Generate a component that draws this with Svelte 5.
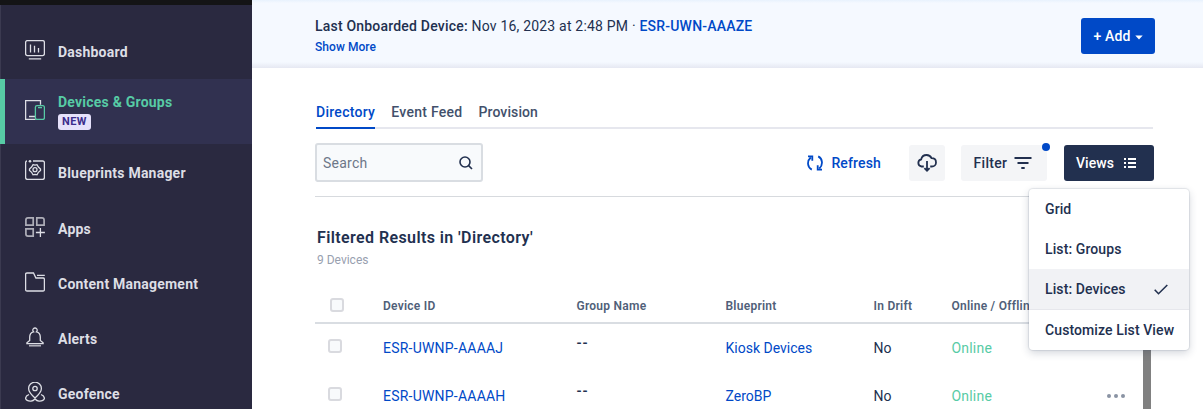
<script lang="ts">
    let activeTab = "Directory";
    let activeView = "List: Devices";
    let search = "";

    const navItems = [
        { icon: "dashboard", text: "Dashboard" },
        { icon: "devices", text: "Devices & Groups", active: true },
        { icon: "blueprints", text: "Blueprints Manager" },
        { icon: "apps", text: "Apps" },
        { icon: "folder", text: "Content Management" },
        { icon: "alerts", text: "Alerts" },
        { icon: "geofence", text: "Geofence" },
    ];
    const tabs = ["Directory", "Event Feed", "Provision"];
    const views = ["Grid", "List: Groups", "List: Devices"];
    const devices = [
        { id: "ESR-UWNP-AAAAJ", group: "--", blueprint: "Kiosk Devices", drift: "No", status: "Online" },
        { id: "ESR-UWNP-AAAAH", group: "--", blueprint: "ZeroBP", drift: "No", status: "Online" },
    ];
</script>

<div class="page">
    <nav class="sidebar">
        {#each navItems as item}
            <a href="#{item.icon}" class="nav-item {item.icon}" class:active={item.active}>
                <svg class="nav-icon" width="20" height="20" viewBox="0 0 20 20">
                    {#if item.icon === "dashboard"}
                        <rect x=".6" y=".6" width="18.8" height="15" rx="1.8" />
                        <path d="M5.5 4.5v8M9.5 5.8v6.7M13.5 8v4.5M3.8 18.8h12.4" />
                    {:else if item.icon === "devices"}
                        <path d="M15.5 4.7V.6H.6v18.8h10M4 16.5h7" />
                        <path class="green" d="M12 5.7h5.8q1.6 0 1.6 1.6v10.5q0 1.6-1.6 1.6H12q-1.6 0-1.6-1.6V7.3q0-1.6 1.6-1.6ZM13 7.6h4" />
                    {:else if item.icon === "blueprints"}
                        <path d="M2 1Q.6 1 .6 2.6v15q0 1.8 1.8 1.8h15.2q1.8 0 1.8-1.8V2.8q0-1.8-1.8-1.8H8" />
                        <circle class="dot" cx="5" cy="1.3" r="1.3" />
                        <path d="m8 4.7 2 .5 2-.5 1.4 2.4L15.5 9v1.5l-2.1 1.8L12 14.8l-2-.5-2 .5-1.4-2.5-2.1-1.8V9l2.1-1.9Z" />
                        <circle cx="10" cy="9.7" r="2" />
                    {:else if item.icon === "apps"}
                        <path class="dim" d="M8.2.9H3Q.9.9.9 3v5.2h7.3ZM11.8.9H17q2.1 0 2.1 2.1v5.2h-7.3ZM.9 11.8h7.3v7.3H3q-2.1 0-2.1-2.1Z" />
                        <path d="M15.4 11v9M10.9 15.5h9" />
                    {:else if item.icon === "folder"}
                        <path d="M2 1h6.5l2.4 5h7.2q1.3 0 1.3 1.3v10.4q0 1.3-1.3 1.3H2Q.6 19 .6 17.7V2.3Q.6 1 2 1ZM12 3.4h7.8" />
                    {:else if item.icon === "alerts"}
                        <path d="M8.5 4.8a2.2 2.2 0 1 1 3 0q3.8 1 3.8 5.2v3.5l2.8 2.3v.8H1.9v-.8l2.8-2.3V10q0-4.2 3.8-5.2Z" />
                        <path class="dim" d="M4 18.7h12" />
                    {:else}
                        <path d="M10 16S3.6 10.5 3.6 6.6a6.4 6.4 0 0 1 12.8 0C16.4 10.5 10 16 10 16Z" />
                        <circle cx="10" cy="6.5" r="2.2" />
                        <path d="M4 12.500C1.500 13.500.6 15 .6 16.300c0 1.800 2.400 3 5.400 2.800 1.800-.1 2.800-.8 4-2.100 1.200 1.300 2.200 2 4 2.100 3 .2 5.400-1 5.400-2.800 0-1.300-.9-2.800-3.400-3.800" />
                    {/if}
                </svg>
                <span class="nav-label">
                    <span class="nav-text">{item.text}</span>
                    {#if item.active}<span class="badge">NEW</span>{/if}
                </span>
            </a>
        {/each}
    </nav>

    <main>
        <header>
            <div class="onboarded">
                <p><b>Last Onboarded Device:</b> Nov 16, 2023 at 2:48 PM · <a href="#device">ESR-UWN-AAAZE</a></p>
                <a class="show-more" href="#more">Show More</a>
            </div>
            <button class="add">
                + Add
                <svg width="8" height="5" viewBox="0 0 8 5"><path d="M.3.4h7.4L4 4.4Z" fill="currentColor" /></svg>
            </button>
        </header>

        <section class="content">
            <div class="tabs">
                {#each tabs as tab}
                    <button class="tab" class:selected={activeTab === tab} on:click={() => (activeTab = tab)}>{tab}</button>
                {/each}
            </div>

            <div class="toolbar">
                <label class="search">
                    <input bind:value={search} placeholder="Search" />
                    <svg width="14" height="14" viewBox="0 0 14 14"><circle cx="6" cy="6" r="5" /><path d="m9.6 9.6 3.4 3.4" /></svg>
                </label>
                <button class="refresh">
                    <svg width="16" height="16" viewBox="0 0 16 16">
                        <path d="M4.8 14.6C.2 12.4-.2 6 3.7 2.5M1 1.300h4.300v4.500M11.200 1.400c4.600 2.200 5 8.600 1.100 12.100M15 14.700h-4.300v-4.500" />
                    </svg>
                    Refresh
                </button>
                <button class="download" aria-label="Download">
                    <svg width="20" height="18" viewBox="0 0 20 18">
                        <path d="M6.800 12.500H4.500a3.600 3.600 0 0 1-.3-7.100C4.700 2.700 7 1 9.600 1c2.400 0 4 1.200 4.900 3.200 2.700 0 4.500 1.800 4.500 4.200s-1.800 4.100-4.200 4.100h-1.600M10 7v9M7.400 14.100l2.600 2.600 2.600-2.600" />
                    </svg>
                </button>
                <button class="filter">
                    Filter
                    <svg width="18" height="12" viewBox="0 0 18 12"><path d="M.5 1h17M3.500 6h11M7.300 11h3.400" /></svg>
                    <span class="notice"></span>
                </button>
                <div class="views">
                    <button class="views-button">
                        Views
                        <svg width="12" height="10" viewBox="0 0 12 10"><path d="M0 1h2M0 5h2M0 9h2M4 1h8M4 5h8M4 9h8" /></svg>
                    </button>
                    <div class="menu">
                        {#each views as view}
                            <button class="option" class:chosen={activeView === view} on:click={() => (activeView = view)}>
                                {view}
                                {#if activeView === view}
                                    <svg width="14" height="11" viewBox="0 0 14 11"><path d="m.7 5.7 3.800 4L13.300 1" /></svg>
                                {/if}
                            </button>
                        {/each}
                        <button class="option customize">Customize List View</button>
                    </div>
                </div>
            </div>

            <h1>Filtered Results in 'Directory'</h1>
            <p class="count">9 Devices</p>

            <div class="row table-head">
                <span class="box"></span>
                <span>Device ID</span>
                <span>Group Name</span>
                <span>Blueprint</span>
                <span>In Drift</span>
                <span>Online / Offline</span>
            </div>
            <div class="table-body">
                <div class="rows">
                    {#each devices as device}
                        <div class="row">
                            <span class="box"></span>
                            <a class="device-id" href="#{device.id}">{device.id}</a>
                            <span class="group">{device.group}</span>
                            <a href="#{device.blueprint}">{device.blueprint}</a>
                            <span>{device.drift}</span>
                            <span class="online">{device.status}</span>
                            <svg class="more" width="18" height="4" viewBox="0 0 18 4"><circle cx="2" cy="2" r="2" /><circle cx="9" cy="2" r="2" /><circle cx="16" cy="2" r="2" /></svg>
                        </div>
                    {/each}
                </div>
                <div class="scrollbar"></div>
            </div>
        </section>
    </main>
</div>

<style>
    :global(body) {
        background: #ffffff;
    }
    .page {
        display: flex;
        height: 409px;
        overflow: hidden;
        font-family: Roboto, "Liberation Sans", sans-serif;
        font-size: 14px;
        line-height: 20px;
        color: #22304f;
    }
    .page * {
        box-sizing: border-box;
    }
    a {
        color: #0049c7;
        text-decoration: none;
    }
    p,
    h1 {
        margin: 0;
    }
    button {
        font: inherit;
        font-weight: 500;
        color: inherit;
        border: none;
        padding: 0;
        background: none;
        cursor: pointer;
    }
    svg {
        flex: none;
        fill: none;
        stroke: currentColor;
    }

    .sidebar {
        width: 252px;
        flex: none;
        background: #2a2940;
        border-top: 5px solid #141416;
        box-shadow: inset 1px 0 #3b3a50;
        padding-top: 19px;
    }
    .nav-item {
        display: flex;
        align-items: center;
        height: 55px;
        padding-left: 25px;
        color: #dddee5;
    }
    .nav-icon {
        margin-right: 13px;
        margin-bottom: 3px;
        stroke-width: 1.3;
    }
    .nav-item.active {
        height: 65px;
        padding-left: 20px;
        border-left: 5px solid #57cba5;
        background: #313150;
        color: #57cba5;
    }
    .active .nav-icon {
        color: #dddee5;
        margin-bottom: 4px;
    }
    .nav-item.blueprints,
    .nav-item.apps {
        margin-top: 1px;
    }
    .blueprints .nav-icon {
        margin-bottom: 5px;
    }
    .green {
        stroke: #57cba5;
    }
    .dot {
        fill: currentColor;
        stroke: none;
    }
    .dim {
        stroke: #aeaeb8;
        stroke-width: 1.7;
    }
    .nav-label {
        display: flex;
        flex-direction: column;
        align-items: flex-start;
    }
    .nav-text {
        font-weight: 700;
        letter-spacing: 0.22px;
    }
    .active .nav-label {
        padding-bottom: 1px;
    }
    .badge {
        height: 16px;
        padding: 0 4px;
        margin-top: 2px;
        margin-bottom: 1px;
        border-radius: 3px;
        background: #e6e1fb;
        color: #3c2d8c;
        font-size: 11px;
        font-weight: 700;
        line-height: 15px;
        letter-spacing: 0.4px;
    }

    main {
        flex: 1;
        min-width: 0;
    }
    header {
        display: flex;
        justify-content: space-between;
        height: 68px;
        padding: 16px 48px 0 63px;
        background: linear-gradient(#e8f2fd, #f5f9ff 3px, #f5f9ff 62px, #e6e8f2);
    }
    .onboarded b,
    .onboarded a {
        font-weight: 500;
    }
    .onboarded p {
        letter-spacing: 0.2px;
    }
    .show-more {
        display: block;
        margin-top: 1px;
        font-size: 12px;
        letter-spacing: 0.05px;
    }
    .add {
        display: flex;
        align-items: center;
        justify-content: center;
        gap: 4px;
        width: 74px;
        height: 36px;
        margin-top: 2px;
        border-radius: 3px;
        background: #0049c7;
        color: #ffffff;
        letter-spacing: 0.15px;
    }
    .add svg {
        stroke: none;
        margin-top: 2px;
    }

    .content {
        padding: 34px 49px 0 63px;
    }
    .tabs {
        display: flex;
        gap: 16px;
        height: 27px;
        margin: 0 1px;
        box-shadow: inset 0 -2px #e6e7ee;
    }
    .tab {
        height: 27px;
        padding-bottom: 7px;
        color: #42506b;
        letter-spacing: 0.28px;
    }
    .tab:last-child {
        letter-spacing: 0.1px;
    }
    .tab.selected {
        color: #0049c7;
        border-bottom: 2px solid #0049c7;
        padding-bottom: 5px;
    }
    .toolbar {
        display: flex;
        align-items: center;
        height: 68px;
        border-bottom: 1px solid #d7dade;
    }
    .search {
        display: flex;
        align-items: center;
        width: 168px;
        height: 39px;
        padding: 0 8px 0 6px;
        margin-right: auto;
        border: 2px solid #d9dde2;
        border-radius: 3px;
        background: #f8fafc;
    }
    .search input {
        flex: 1;
        min-width: 0;
        padding: 0;
        border: none;
        outline: none;
        background: none;
        font: inherit;
        letter-spacing: 0.25px;
    }
    .search input::placeholder {
        color: #6d7788;
    }
    .search svg {
        stroke-width: 1.6;
    }
    .refresh {
        display: flex;
        align-items: center;
        gap: 8px;
        margin-right: 28px;
        color: #0049c7;
        letter-spacing: 0.15px;
    }
    .refresh svg {
        stroke-width: 1.8;
    }
    .download,
    .filter {
        display: flex;
        align-items: center;
        justify-content: center;
        width: 36px;
        height: 36px;
        margin-right: 16px;
        border-radius: 3px;
        background: #f4f5f7;
    }
    .download svg,
    .filter svg {
        stroke-width: 1.8;
    }
    .filter {
        position: relative;
        gap: 7px;
        width: 86px;
        padding-right: 2px;
        margin-right: 17px;
        letter-spacing: 0.3px;
    }
    .notice {
        position: absolute;
        top: -2px;
        right: -3px;
        width: 8px;
        height: 8px;
        border-radius: 50%;
        background: #0049c7;
    }
    .views {
        position: relative;
    }
    .views-button {
        display: flex;
        align-items: center;
        justify-content: center;
        gap: 10px;
        width: 90px;
        height: 36px;
        padding-right: 6px;
        border-radius: 3px;
        background: #22304f;
        color: #ffffff;
        letter-spacing: 0.05px;
    }
    .views-button svg {
        stroke-width: 1.8;
        margin-top: 1px;
    }
    .menu {
        position: absolute;
        top: 44px;
        right: -35px;
        width: 160px;
        border-radius: 4px;
        background: #ffffff;
        box-shadow: 0 0 1px 1px rgba(34, 48, 79, 0.1), 0 3px 8px rgba(34, 48, 79, 0.2);
    }
    .option {
        display: flex;
        align-items: center;
        justify-content: space-between;
        width: 160px;
        height: 40px;
        padding: 0 21px 0 16px;
        white-space: nowrap;
        letter-spacing: 0.1px;
    }
    .option svg {
        stroke-width: 1.6;
        margin-top: 2px;
    }
    .option.chosen {
        background: #f1f2f5;
    }
    .customize {
        height: 41px;
        border-top: 1px solid #e6e7ec;
    }

    h1 {
        padding: 31px 0 0 2px;
        font-size: 16px;
        font-weight: 600;
        line-height: 20px;
        letter-spacing: 0.4px;
    }
    .count {
        margin: 3px 0 0 2px;
        color: #98a0af;
        font-size: 12px;
        line-height: 18px;
    }
    .row {
        display: grid;
        grid-template-columns: 68px 193.5px 149px 148px 78px 155px 1fr;
        align-items: center;
        height: 48px;
    }
    .table-head {
        height: 36px;
        margin-top: 19px;
        padding-top: 1px;
        border-bottom: 2px solid #d9dde2;
        color: #505f79;
        font-size: 12px;
        font-weight: 600;
        letter-spacing: 0.25px;
    }
    .box {
        width: 14px;
        height: 14px;
        margin-left: 13px;
        margin-bottom: 4px;
        border: 2px solid #d9dadf;
        border-radius: 3px;
        background: #f8fafc;
    }
    .table-head .box {
        margin-left: 15px;
        margin-bottom: 1px;
    }
    .table-body {
        display: flex;
        height: 85px;
    }
    .rows {
        flex: 1;
    }
    .device-id {
        letter-spacing: 0.22px;
    }
    .group {
        padding-bottom: 10px;
        font-weight: 600;
        letter-spacing: 0.8px;
    }
    .online {
        color: #57cba5;
        letter-spacing: 0.2px;
    }
    .more {
        fill: #8a93a3;
        stroke: none;
    }
    .scrollbar {
        width: 8px;
        margin-right: 3px;
        background: #808080;
    }
</style>
